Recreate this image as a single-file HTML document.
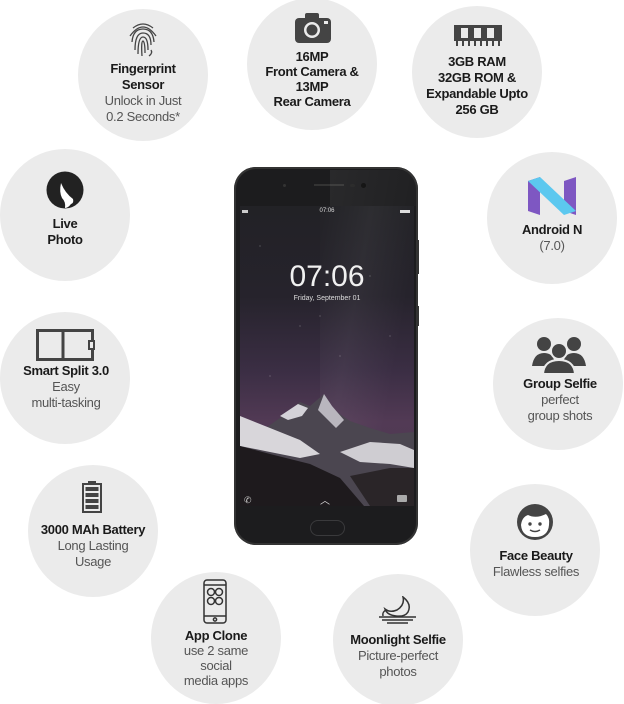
<!DOCTYPE html>
<html><head><meta charset="utf-8"><style>
html,body{margin:0;padding:0;background:#fff;width:624px;height:704px;overflow:hidden;position:relative;font-family:"Liberation Sans",sans-serif;}
.c{position:absolute;width:130px;height:132px;border-radius:50%;background:#ebebeb;}
.t{position:absolute;text-align:center;font-size:13px;line-height:16px;color:#111;width:160px;letter-spacing:-0.3px;}
.t b{font-weight:bold;color:#1a1a1a;}
.t span{color:#555;}
.i{position:absolute;}
</style></head><body>

<div class="c" style="left:78px;top:9px"></div>
<div class="c" style="left:247px;top:-2px"></div>
<div class="c" style="left:412px;top:6px"></div>
<div class="c" style="left:0px;top:149px"></div>
<div class="c" style="left:487px;top:152px"></div>
<div class="c" style="left:0px;top:312px"></div>
<div class="c" style="left:493px;top:318px"></div>
<div class="c" style="left:28px;top:465px"></div>
<div class="c" style="left:470px;top:484px"></div>
<div class="c" style="left:151px;top:572px"></div>
<div class="c" style="left:333px;top:574px"></div>

<!-- Fingerprint -->
<svg class="i" style="left:127px;top:20px" width="32" height="38" viewBox="0 0 32 38" fill="none" stroke="#444" stroke-width="1.3">
<path d="M6 8 Q16 0 26 8"/><path d="M3 16 Q16 -2 29 16"/><path d="M5 22 Q6 9 16 9 Q26 9 27 22"/>
<path d="M8 30 Q8 13 16 13 Q24 13 24 25"/><path d="M11 34 Q11 17 16 17 Q21 17 21 30"/><path d="M15 36 Q14 21 16 21 Q18 22 18 33"/><path d="M24 30 Q26 33 22 36"/>
</svg>
<div class="t" style="left:63px;top:61px"><b>Fingerprint<br>Sensor</b><br><span>Unlock in Just<br>0.2 Seconds*</span></div>

<!-- Camera -->
<svg class="i" style="left:295px;top:13px" width="36" height="30" viewBox="0 0 36 30">
<rect x="0" y="5" width="36" height="25" rx="4" fill="#444"/><rect x="10" y="0" width="14" height="8" rx="2" fill="#444"/>
<circle cx="17" cy="17" r="8" fill="#ebebeb"/><circle cx="17" cy="17" r="5.5" fill="#444"/><rect x="29" y="8" width="4" height="3" fill="#ebebeb"/>
</svg>
<div class="t" style="left:232px;top:49px;line-height:15px"><b>16MP<br>Front Camera &amp;<br>13MP<br>Rear Camera</b></div>

<!-- RAM -->
<svg class="i" style="left:454px;top:25px" width="48" height="22" viewBox="0 0 48 22">
<rect x="0" y="0" width="48" height="16" fill="#444"/><rect x="7" y="3" width="7" height="10" fill="#ebebeb"/><rect x="20" y="3" width="7" height="10" fill="#ebebeb"/><rect x="33" y="3" width="7" height="10" fill="#ebebeb"/>
<g fill="#444"><rect x="2" y="16" width="2" height="5"/><rect x="8" y="16" width="2" height="5"/><rect x="14" y="16" width="2" height="5"/><rect x="20" y="16" width="2" height="5"/><rect x="26" y="16" width="2" height="5"/><rect x="32" y="16" width="2" height="5"/><rect x="38" y="16" width="2" height="5"/><rect x="44" y="16" width="2" height="5"/></g>
</svg>
<div class="t" style="left:397px;top:54px"><b>3GB RAM<br>32GB ROM &amp;<br>Expandable Upto<br>256 GB</b></div>

<!-- Live photo -->
<svg class="i" style="left:46px;top:171px" width="38" height="38" viewBox="0 0 38 38">
<circle cx="19" cy="19" r="18.5" fill="#222"/><path d="M15 12 Q19 22 27 28 Q28 32 25 33 Q22 37 19 37 Q20 31 16 27 Q13 21 15 12Z" fill="#fff"/>
</svg>
<div class="t" style="left:-15px;top:216px"><b>Live<br>Photo</b></div>

<!-- Android N -->
<svg class="i" style="left:528px;top:177px" width="48" height="38" viewBox="0 0 48 38">
<polygon points="0,4 12,0 12,38 0,34" fill="#7e57c2"/><polygon points="36,4 48,0 48,38 36,34" fill="#7e57c2"/><polygon points="0,4 12,0 48,34 36,38" fill="#5cc8ef"/>
</svg>
<div class="t" style="left:472px;top:222px"><b>Android N</b><br><span>(7.0)</span></div>

<!-- Smart split -->
<svg class="i" style="left:36px;top:329px" width="60" height="32" viewBox="0 0 60 32" fill="none" stroke="#444" stroke-width="3">
<rect x="1.5" y="1.5" width="55" height="29"/><line x1="27" y1="1.5" x2="27" y2="30"/><rect x="53" y="12" width="5" height="8" fill="#ebebeb" stroke-width="2"/>
</svg>
<div class="t" style="left:-14px;top:363px"><b>Smart Split 3.0</b><br><span>Easy<br>multi-tasking</span></div>

<!-- Group -->
<svg class="i" style="left:532px;top:336px" width="54" height="38" viewBox="0 0 54 38" fill="#444">
<circle cx="12" cy="8" r="7"/><circle cx="42" cy="8" r="7"/><path d="M0 30 Q2 17 12 17 Q20 17 22 24 L22 30Z"/><path d="M54 30 Q52 17 42 17 Q34 17 32 24 L32 30Z"/>
<circle cx="27" cy="15" r="8" stroke="#ebebeb" stroke-width="2"/><path d="M11 38 Q12 24 27 24 Q42 24 43 38Z" stroke="#ebebeb" stroke-width="2"/>
</svg>
<div class="t" style="left:480px;top:376px"><b>Group Selfie</b><br><span>perfect<br>group shots</span></div>

<!-- Battery -->
<svg class="i" style="left:82px;top:481px" width="20" height="32" viewBox="0 0 20 32">
<rect x="6" y="0" width="8" height="3" fill="#444"/><rect x="1" y="3" width="18" height="28" fill="none" stroke="#444" stroke-width="2"/>
<g fill="#444"><rect x="3.5" y="6" width="13" height="4"/><rect x="3.5" y="12" width="13" height="4"/><rect x="3.5" y="18" width="13" height="4"/><rect x="3.5" y="24" width="13" height="4"/></g>
</svg>
<div class="t" style="left:13px;top:522px"><b>3000 MAh Battery</b><br><span>Long Lasting<br>Usage</span></div>

<!-- Face -->
<svg class="i" style="left:516px;top:503px" width="38" height="38" viewBox="0 0 38 38">
<circle cx="19" cy="19" r="18" fill="#444"/><path d="M5 22 Q6 14 12 12 Q20 16 30 11 Q34 15 33 22 Q32 34 19 34 Q6 34 5 22Z" fill="#fff"/>
<circle cx="14" cy="21" r="1.7" fill="#444"/><circle cx="24" cy="21" r="1.7" fill="#444"/><path d="M14 27 Q19 30 24 27" stroke="#444" stroke-width="1.5" fill="none"/>
</svg>
<div class="t" style="left:456px;top:548px"><b>Face Beauty</b><br><span>Flawless selfies</span></div>

<!-- App clone -->
<svg class="i" style="left:203px;top:579px" width="24" height="45" viewBox="0 0 24 45" fill="none" stroke="#333" stroke-width="1.5">
<rect x="1" y="1" width="22" height="43" rx="3"/><line x1="1" y1="6" x2="23" y2="6"/><line x1="1" y1="37" x2="23" y2="37"/><circle cx="12" cy="40.5" r="1.6"/>
<circle cx="8" cy="13" r="3.5"/><circle cx="16" cy="13" r="3.5"/><circle cx="8" cy="22" r="3.5"/><circle cx="16" cy="22" r="3.5"/>
</svg>
<div class="t" style="left:136px;top:628px;line-height:15px"><b>App Clone</b><br><span>use 2 same<br>social<br>media apps</span></div>

<!-- Moonlight -->
<svg class="i" style="left:378px;top:596px" width="40" height="28" viewBox="0 0 40 28" fill="none" stroke="#333" stroke-width="1.5">
<path d="M25 1 Q34 8 30 16 Q27 21 18 20 Q9 19 7 13 Q12 17 19 14 Q27 9 25 1Z"/><path d="M5 20 Q4 16 8 14"/>
<line x1="1" y1="21" x2="38" y2="21"/><line x1="4" y1="24" x2="35" y2="24"/><line x1="9" y1="27" x2="30" y2="27"/>
</svg>
<div class="t" style="left:318px;top:632px"><b>Moonlight Selfie</b><br><span>Picture-perfect<br>photos</span></div>

<!-- Phone -->
<div style="position:absolute;left:234px;top:167px;width:184px;height:378px;border-radius:22px;background:#1c1c1e;box-shadow:inset 0 0 0 2px #333;"></div>
<div style="position:absolute;left:416px;top:240px;width:3px;height:34px;background:#333"></div>
<div style="position:absolute;left:416px;top:306px;width:3px;height:20px;background:#333"></div>
<div style="position:absolute;left:240px;top:206px;width:174px;height:300px;overflow:hidden;background:linear-gradient(180deg,#222226 0%,#26232c 30%,#3b2e44 55%,#523a55 72%,#4a3a50 100%);">
 <div style="position:absolute;left:80px;top:0;width:120px;height:300px;background:linear-gradient(100deg,rgba(255,255,255,0) 0%,rgba(255,255,255,0.05) 30%,rgba(255,255,255,0) 60%)"></div>
 <svg style="position:absolute;left:0;top:0" width="174" height="300" viewBox="0 0 174 300">
  <polygon points="0,232 20,226 40,212 60,196 70,200 84,188 94,204 110,215 130,222 150,228 174,226 174,300 0,300" fill="#4b4650"/>
  <polygon points="40,210 58,198 68,202 62,210 48,214" fill="#d4d2d8"/>
  <polygon points="84,188 92,200 104,214 96,222 86,212 78,204" fill="#b9b6be"/>
  <polygon points="0,210 30,222 60,234 80,248 60,252 30,246 0,240" fill="#d8d6da"/>
  <polygon points="100,246 130,236 160,238 174,244 174,262 150,258 120,256" fill="#cfcdd2"/>
  <polygon points="0,240 30,248 70,258 100,272 124,300 0,300" fill="#1e1a1d"/>
  <polygon points="110,270 150,262 174,262 174,300 130,300" fill="#2a2528"/>
  <g fill="#fff" opacity="0.5"><circle cx="20" cy="40" r="0.5"/><circle cx="60" cy="120" r="0.5"/><circle cx="130" cy="70" r="0.5"/><circle cx="100" cy="150" r="0.5"/><circle cx="30" cy="170" r="0.5"/><circle cx="150" cy="130" r="0.5"/><circle cx="80" cy="110" r="0.5"/></g>
 </svg>
 <div style="position:absolute;left:0;top:2px;width:174px;text-align:center;color:#ddd;font-size:6px">07:06</div>
 <div style="position:absolute;left:2px;top:4px;width:6px;height:3px;background:#ccc"></div>
 <div style="position:absolute;right:4px;top:4px;width:10px;height:3px;background:#ddd"></div>
 <div style="position:absolute;left:0;top:54px;width:174px;text-align:center;color:#f0f0f0;font-size:30px;letter-spacing:0px">07:06</div>
 <div style="position:absolute;left:0;top:89px;width:174px;text-align:center;color:#ddd;font-size:7px">Friday, September 01</div>
 <div style="position:absolute;left:4px;top:289px;color:#ccc;font-size:9px">✆</div>
 <div style="position:absolute;left:80px;top:286px;color:#ddd;font-size:10px">︿</div>
 <div style="position:absolute;left:157px;top:289px;width:10px;height:7px;background:#aaa;border-radius:1px"></div>
</div>
<div style="position:absolute;left:310px;top:520px;width:33px;height:14px;border-radius:8px;border:1px solid #3a3a3c"></div>
<div style="position:absolute;left:314px;top:184px;width:30px;height:2px;background:#333"></div>
<div style="position:absolute;left:350px;top:184px;width:5px;height:3px;background:#222;border-radius:2px"></div>
<div style="position:absolute;left:361px;top:183px;width:5px;height:5px;background:#0b0b0b;border-radius:50%"></div>
<div style="position:absolute;left:283px;top:184px;width:3px;height:3px;background:#333;border-radius:50%"></div>
<div style="position:absolute;left:330px;top:170px;width:86px;height:36px;background:linear-gradient(100deg,rgba(255,255,255,0.06),rgba(255,255,255,0.02));border-top-right-radius:18px"></div>
</body></html>
